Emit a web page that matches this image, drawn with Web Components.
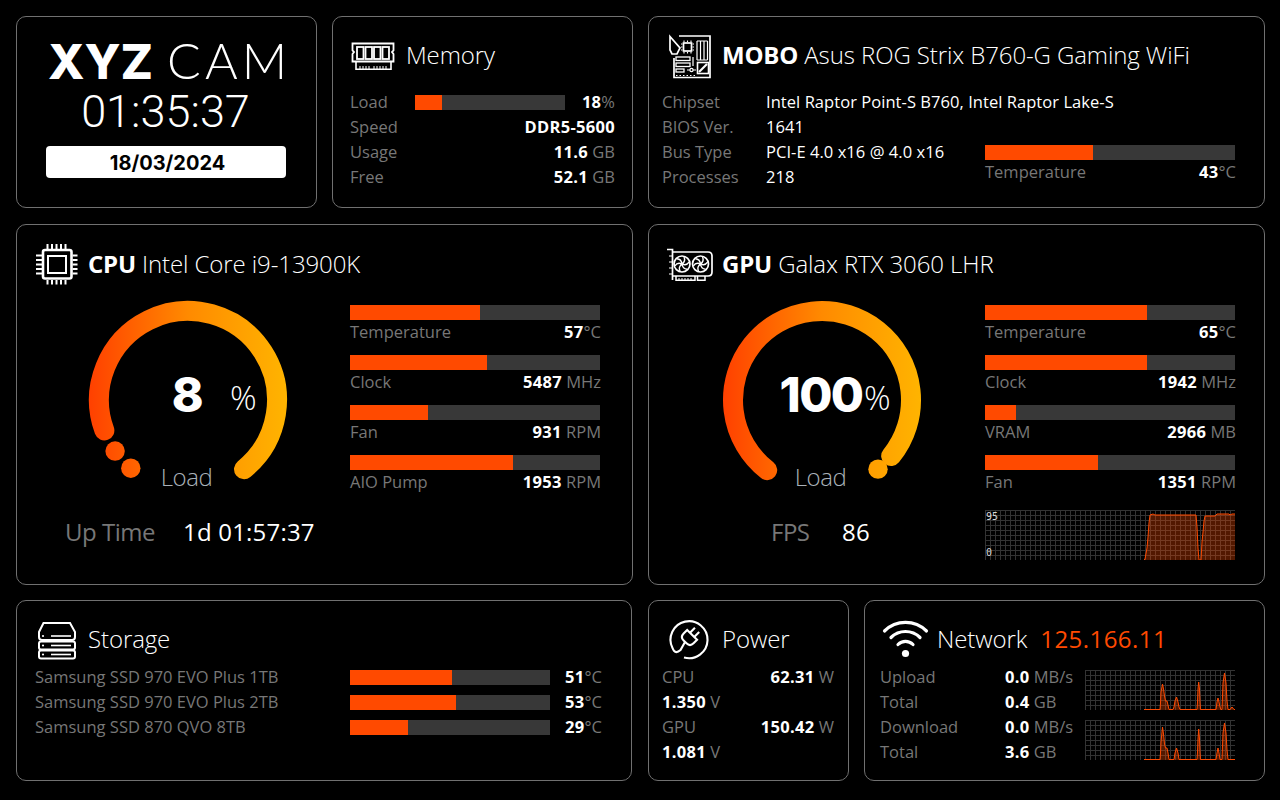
<!DOCTYPE html>
<html>
<head>
<meta charset="utf-8">
<title>XYZ CAM</title>
<style>
  html, body { margin: 0; background: #000; }
  body { width: 1280px; height: 800px; overflow: hidden; font: 16.5px/25px "Open Sans", "Liberation Sans", sans-serif; color: #fff; }
  b { font-weight: 700; color: #fff; letter-spacing: 0.3px; }
  .w { color: #fff; letter-spacing: 0.05px; }
  .ip { color: #ff4a00; margin-left: 13px; font-weight: 400; letter-spacing: 0.45px; }
  span[slot="title"] { letter-spacing: -0.1px; }
  span[slot="title"] b { letter-spacing: -0.2px; }
  dash-meter + dash-meter { margin-top: 10px; }
  dash-meter + dash-graph { margin-top: 15px; }
  dash-graph + dash-graph { margin-top: 10px; }
</style>
</head>
<body>

<dash-page>
  <dash-clock slot="a" style="width:301px"></dash-clock>

  <dash-card slot="a" style="width:301px;--pad:17px;--pad-r:18px;--gap:11px">
    <dash-icon slot="icon" name="ram"></dash-icon>
    <span slot="title">Memory</span>
    <dash-row label="Load" label-w="65">
      <dash-bar slot="mid" value="18" width="150"></dash-bar>
      <span slot="value"><b>18</b>%</span>
    </dash-row>
    <dash-row label="Speed"><b slot="value">DDR5-5600</b></dash-row>
    <dash-row label="Usage"><span slot="value"><b>11.6</b> GB</span></dash-row>
    <dash-row label="Free"><span slot="value"><b>52.1</b> GB</span></dash-row>
  </dash-card>

  <dash-card slot="a" style="width:617px;--pad:13px;--pad-r:30px;--gap:11px">
    <dash-icon slot="icon" name="mobo"></dash-icon>
    <span slot="title"><b>MOBO</b> Asus ROG Strix B760-G Gaming WiFi</span>
    <dash-split left="323">
      <div>
        <dash-row label="Chipset" label-w="104" start><span slot="value" class="w">Intel Raptor Point-S B760, Intel Raptor Lake-S</span></dash-row>
        <dash-row label="BIOS Ver." label-w="104" start><span slot="value" class="w">1641</span></dash-row>
        <dash-row label="Bus Type" label-w="104" start><span slot="value" class="w">PCI-E 4.0 x16 @ 4.0 x16</span></dash-row>
        <dash-row label="Processes" label-w="104" start><span slot="value" class="w">218</span></dash-row>
      </div>
      <dash-meter slot="right" style="margin-top:55px" label="Temperature" value="43" width="250"><span><b>43</b>°C</span></dash-meter>
    </dash-split>
  </dash-card>

  <dash-card slot="b" style="width:617px;--pad:19px;--pad-r:30px;--top:15px">
    <dash-icon slot="icon" name="cpu"></dash-icon>
    <span slot="title"><b>CPU</b> Intel Core i9-13900K</span>
    <dash-split left="314" style="margin-top:17px">
      <div>
        <dash-gauge value="8" label="Load" arc="-110,141" dots="-140,-125" style="margin-left:52px;margin-top:-5px"></dash-gauge>
        <dash-readout label="Up Time" value="1d 01:57:37" left="29" label-w="118"></dash-readout>
      </div>
      <div slot="right">
        <dash-meter label="Temperature" value="52" width="250"><span><b>57</b>°C</span></dash-meter>
        <dash-meter label="Clock" value="54.8" width="250"><span><b>5487</b> MHz</span></dash-meter>
        <dash-meter label="Fan" value="31.2" width="250"><span><b>931</b> RPM</span></dash-meter>
        <dash-meter label="AIO Pump" value="65.2" width="250"><span><b>1953</b> RPM</span></dash-meter>
      </div>
    </dash-split>
  </dash-card>

  <dash-card slot="b" style="width:617px;--pad:18px;--pad-r:30px;--top:15px">
    <dash-icon slot="icon" name="gpu"></dash-icon>
    <span slot="title"><b>GPU</b> Galax RTX 3060 LHR</span>
    <dash-split left="318" style="margin-top:17px">
      <div>
        <dash-gauge value="100" label="Load" arc="-142,129" dots="141" style="margin-left:55px;margin-top:-5px"></dash-gauge>
        <dash-readout label="FPS" value="86" left="104" label-w="71"></dash-readout>
      </div>
      <div slot="right">
        <dash-meter label="Temperature" value="64.8" width="250"><span><b>65</b>°C</span></dash-meter>
        <dash-meter label="Clock" value="64.8" width="250"><span><b>1942</b> MHz</span></dash-meter>
        <dash-meter label="VRAM" value="12.4" width="250"><span><b>2966</b> MB</span></dash-meter>
        <dash-meter label="Fan" value="45.2" width="250"><span><b>1351</b> RPM</span></dash-meter>
        <dash-graph type="fps" width="250" height="50"></dash-graph>
      </div>
    </dash-split>
  </dash-card>

  <dash-card slot="c" style="width:616px;margin-right:1px;--pad:18px;--pad-r:30px">
    <dash-icon slot="icon" name="storage"></dash-icon>
    <span slot="title">Storage</span>
    <dash-row label="Samsung SSD 970 EVO Plus 1TB" label-w="315">
      <dash-bar slot="mid" value="51" width="200"></dash-bar>
      <span slot="value"><b>51</b>°C</span>
    </dash-row>
    <dash-row label="Samsung SSD 970 EVO Plus 2TB" label-w="315">
      <dash-bar slot="mid" value="53" width="200"></dash-bar>
      <span slot="value"><b>53</b>°C</span>
    </dash-row>
    <dash-row label="Samsung SSD 870 QVO 8TB" label-w="315">
      <dash-bar slot="mid" value="29" width="200"></dash-bar>
      <span slot="value"><b>29</b>°C</span>
    </dash-row>
  </dash-card>

  <dash-card slot="c" style="width:201px;--pad:13px;--pad-r:15px">
    <dash-icon slot="icon" name="power"></dash-icon>
    <span slot="title">Power</span>
    <dash-row label="CPU"><span slot="value"><b>62.31</b> W</span></dash-row>
    <dash-row start><span slot="value"><b>1.350</b> V</span></dash-row>
    <dash-row label="GPU"><span slot="value"><b>150.42</b> W</span></dash-row>
    <dash-row start><span slot="value"><b>1.081</b> V</span></dash-row>
  </dash-card>

  <dash-card slot="c" style="width:401px;--pad:15px;--pad-r:29px">
    <dash-icon slot="icon" name="wifi"></dash-icon>
    <span slot="title">Network<span class="ip">125.166.11</span></span>
    <dash-split left="205">
      <div>
        <dash-row label="Upload" label-w="125" start><span slot="value"><b>0.0</b> MB/s</span></dash-row>
        <dash-row label="Total" label-w="125" start><span slot="value"><b>0.4</b> GB</span></dash-row>
        <dash-row label="Download" label-w="125" start><span slot="value"><b>0.0</b> MB/s</span></dash-row>
        <dash-row label="Total" label-w="125" start><span slot="value"><b>3.6</b> GB</span></dash-row>
      </div>
      <div slot="right" style="margin-top:5px">
        <dash-graph type="up" width="150" height="40"></dash-graph>
        <dash-graph type="down" width="150" height="40"></dash-graph>
      </div>
    </dash-split>
  </dash-card>
</dash-page>

<script>
(function() {
  const GREY = '#777';

  function el(html) {
    const t = document.createElement('template');
    t.innerHTML = html;
    return t;
  }

  // page: three rows of cards
  const pageTpl = el(`
    <style>
      :host { display: block; padding: 16px 0 0 16px; }
      .r { display: flex; gap: 15px; }
      .a { height: 192px; margin-bottom: 16px; }
      .b { height: 361px; margin-bottom: 15px; }
      .c { height: 181px; }
    </style>
    <div class="r a"><slot name="a"></slot></div>
    <div class="r b"><slot name="b"></slot></div>
    <div class="r c"><slot name="c"></slot></div>
  `);
  class DashPage extends HTMLElement {
    constructor() {
      super();
      this.attachShadow({ mode: 'open' });
      this.shadowRoot.appendChild(pageTpl.content.cloneNode(true));
    }
  }

  const cardTpl = el(`
    <style>
      :host { display: block; box-sizing: border-box; height: 100%; border: 1px solid #707070; border-radius: 10px; background: #000;
        padding: var(--top, 14px) var(--pad-r, 18px) 0 var(--pad, 18px); flex: none; }
      header { display: flex; align-items: center; height: 48px; font-size: 24px; line-height: 48px; font-weight: 300; color: #fff; white-space: nowrap; margin-bottom: var(--gap, 2px); }
    </style>
    <header><slot name="icon"></slot><slot name="title"></slot></header>
    <slot></slot>
  `);
  class DashCard extends HTMLElement {
    constructor() {
      super();
      this.attachShadow({ mode: 'open' });
      this.shadowRoot.appendChild(cardTpl.content.cloneNode(true));
    }
  }

  const clockTpl = el(`
    <style>
      :host { display: flex; flex-direction: column; align-items: center; box-sizing: border-box; height: 100%; border: 1px solid #707070; border-radius: 10px; padding-top: 16px; flex: none; }
      .logo { height: 54px; line-height: 54px; white-space: nowrap; margin-left: 6px; }
      .logo b { font: 800 48px/54px Inter, sans-serif; }
      .logo span { font: 300 50px/54px Lato, sans-serif; letter-spacing: 4px; margin-left: 14px; }
      .time { height: 50px; font: 300 45px/50px Roboto, sans-serif; margin-left: -2px; }
      .date { width: 240px; height: 32px; margin-top: 9px; margin-left: -2px; background: #fff; border-radius: 4px; color: #000; text-align: center; text-indent: 4px; font: 700 20px/34px Inter, sans-serif; }
    </style>
    <div class="logo"><b>XYZ</b><span>CAM</span></div>
    <div class="time">01:35:37</div>
    <div class="date">18/03/2024</div>
  `);
  class DashClock extends HTMLElement {
    constructor() {
      super();
      this.attachShadow({ mode: 'open' });
      this.shadowRoot.appendChild(clockTpl.content.cloneNode(true));
    }
  }

  const barTpl = el(`
    <style>
      :host { display: block; height: 15px; background: #383838; flex: none; }
      div { height: 100%; background: #ff4a00; }
    </style>
    <div></div>
  `);
  class DashBar extends HTMLElement {
    static get observedAttributes() {
      return ['value', 'width'];
    }
    constructor() {
      super();
      this.attachShadow({ mode: 'open' });
      this.shadowRoot.appendChild(barTpl.content.cloneNode(true));
    }
    attributeChangedCallback(name, oldValue, newValue) {
      if (name === 'width') this.style.width = newValue + 'px';
      if (name === 'value') this.shadowRoot.querySelector('div').style.width = newValue + '%';
    }
  }

  const rowTpl = el(`
    <style>
      :host { display: flex; align-items: center; height: 25px; line-height: 25px; color: ${GREY}; white-space: nowrap; }
      .l, .v { margin-bottom: 2px; }
      .l { flex: none; }
      .v { flex: 1; text-align: right; margin-right: -1px; }
      :host([start]) .v { text-align: left; }
    </style>
    <span class="l"></span><slot name="mid"></slot><span class="v"><slot name="value"></slot></span>
  `);
  class DashRow extends HTMLElement {
    constructor() {
      super();
      this.attachShadow({ mode: 'open' });
      this.shadowRoot.appendChild(rowTpl.content.cloneNode(true));
    }
    connectedCallback() {
      const l = this.shadowRoot.querySelector('.l');
      l.textContent = this.getAttribute('label') || '';
      if (this.hasAttribute('label-w')) l.style.width = this.getAttribute('label-w') + 'px';
    }
  }

  const meterTpl = el(`
    <style>
      :host { display: block; color: ${GREY}; }
      .t { display: flex; justify-content: space-between; height: 25px; line-height: 23px; margin-right: -1px; white-space: nowrap; }
    </style>
    <dash-bar></dash-bar>
    <div class="t"><span class="l"></span><slot></slot></div>
  `);
  class DashMeter extends HTMLElement {
    constructor() {
      super();
      this.attachShadow({ mode: 'open' });
      this.shadowRoot.appendChild(meterTpl.content.cloneNode(true));
    }
    connectedCallback() {
      const bar = this.shadowRoot.querySelector('dash-bar');
      bar.setAttribute('width', this.getAttribute('width'));
      bar.setAttribute('value', this.getAttribute('value'));
      this.shadowRoot.querySelector('.l').textContent = this.getAttribute('label');
      this.style.width = this.getAttribute('width') + 'px';
    }
  }

  const splitTpl = el(`
    <style>
      :host { display: flex; }
      .l { flex: none; }
    </style>
    <div class="l"><slot></slot></div><slot name="right"></slot>
  `);
  class DashSplit extends HTMLElement {
    constructor() {
      super();
      this.attachShadow({ mode: 'open' });
      this.shadowRoot.appendChild(splitTpl.content.cloneNode(true));
    }
    connectedCallback() {
      this.shadowRoot.querySelector('.l').style.width = this.getAttribute('left') + 'px';
    }
  }

  const readoutTpl = el(`
    <style>
      :host { display: flex; height: 32px; margin-top: 16px; font-size: 24px; line-height: 32px; white-space: nowrap; }
      .l { color: ${GREY}; flex: none; letter-spacing: -0.5px; }
      .v { letter-spacing: 0.2px; }
    </style>
    <span class="l"></span><span class="v"></span>
  `);
  class DashReadout extends HTMLElement {
    constructor() {
      super();
      this.attachShadow({ mode: 'open' });
      this.shadowRoot.appendChild(readoutTpl.content.cloneNode(true));
    }
    connectedCallback() {
      const l = this.shadowRoot.querySelector('.l');
      l.textContent = this.getAttribute('label');
      l.style.width = this.getAttribute('label-w') + 'px';
      this.style.paddingLeft = this.getAttribute('left') + 'px';
      this.shadowRoot.querySelector('.v').textContent = this.getAttribute('value');
    }
  }

  // gauge, angles are clockwise from the top
  const gaugeTpl = el(`
    <style>
      :host { display: block; position: relative; width: 200px; height: 200px; }
      svg { display: block; }
      .val { position: absolute; left: -2px; right: 0; top: 63px; text-align: center; font: 800 48px/64px Inter, sans-serif; letter-spacing: -1.5px; }
      .pct { position: absolute; left: 142px; top: 76px; font-size: 33px; line-height: 44px; font-weight: 300; }
      .lab { position: absolute; left: -3px; right: 0; top: 161px; text-align: center; font-size: 24px; line-height: 32px; font-weight: 300; color: #a9b1b8; letter-spacing: -0.5px; }
    </style>
    <svg width="200" height="200" viewBox="0 0 200 200"></svg>
    <span class="val"></span><span class="pct">%</span><span class="lab"></span>
  `);
  let gaugeId = 0;
  function pt(a) {
    const r = a * Math.PI / 180;
    return [100 + 89 * Math.sin(r), 100 - 89 * Math.cos(r)];
  }
  class DashGauge extends HTMLElement {
    constructor() {
      super();
      this.attachShadow({ mode: 'open' });
      this.shadowRoot.appendChild(gaugeTpl.content.cloneNode(true));
    }
    connectedCallback() {
      const [a0, a1] = this.getAttribute('arc').split(',').map(Number);
      const p0 = pt(a0), p1 = pt(a1);
      const id = 'g' + (gaugeId++);
      const large = (a1 - a0) > 180 ? 1 : 0;
      const dots = this.getAttribute('dots').split(',').map(Number).map(a => {
        const p = pt(a);
        return `<circle cx="${p[0]}" cy="${p[1]}" r="9.7" fill="url(#${id})"/>`;
      }).join('');
      this.shadowRoot.querySelector('svg').innerHTML = `
        <defs><linearGradient id="${id}" gradientUnits="userSpaceOnUse" x1="1" y1="0" x2="199" y2="0">
          <stop offset="0" stop-color="#ff4000"/><stop offset=".5" stop-color="#ff8a00"/><stop offset="1" stop-color="#ffb400"/>
        </linearGradient></defs>
        <path d="M${p0[0]} ${p0[1]}A89 89 0 ${large} 1 ${p1[0]} ${p1[1]}" fill="none" stroke="url(#${id})" stroke-width="20" stroke-linecap="round"/>
        ${dots}`;
      this.shadowRoot.querySelector('.val').textContent = this.getAttribute('value');
      this.shadowRoot.querySelector('.lab').textContent = this.getAttribute('label');
    }
  }

  // trace points read off the reference: x, y in graph pixels
  const TRACES = {
    fps: [[159,50],[160,49],[162,38],[163,27],[164,13],[165,5],[168,4],[170,5],[211,5],[212,17],[213,38],[214,50],[216,50],[217,32],[218,22],[219,11],[220,6],[230,6],[232,4],[244,4],[245,5],[247,4],[250,4]],
    up: [[59,39.5],[75,39.5],[75.5,33],[76,22],[77.5,14],[78.5,19],[79.5,26],[80.5,31],[82,31],[83,35],[84,39.5],[88,39.5],[89,37],[90,31],[91.5,27],[93,32],[94,37],[95,39.5],[112,39.5],[112.5,32],[113,19],[113.7,12],[114.5,19],[115,32],[115.5,39.5],[131,39.5],[132,32],[133,28],[134,32],[135,37],[136,39.5],[137,39.5],[138,13],[139.5,3],[141,13],[142,31],[143,39.5],[145,39.5],[147,37],[149,39.5],[150,39.5]],
    down: [[59,39.5],[75,39.5],[75.5,33],[76,22],[77.5,7],[78.5,14],[79.5,24],[80.5,28],[82,28],[83,33],[84,39.5],[89,39.5],[90,33],[91.5,28],[93,33],[94,39.5],[112,39.5],[112.5,32],[113,19],[113.7,9],[114.5,19],[115,32],[115.5,39.5],[131,39.5],[132,33],[133,28],[134,33],[135,39.5],[137,39.5],[138,13],[139.5,3],[141,13],[142,30],[143,39.5],[150,39.5]]
  };

  const graphTpl = el(`
    <style>
      :host { display: block; position: relative; }
      svg { display: block; }
      span { position: absolute; left: 1px; font: 10px/10px "DejaVu Sans Mono", monospace; color: #d8d8d8; }
    </style>
    <svg></svg>
  `);
  class DashGraph extends HTMLElement {
    constructor() {
      super();
      this.attachShadow({ mode: 'open' });
      this.shadowRoot.appendChild(graphTpl.content.cloneNode(true));
    }
    connectedCallback() {
      const w = +this.getAttribute('width'), h = +this.getAttribute('height');
      const type = this.getAttribute('type');
      const svg = this.shadowRoot.querySelector('svg');
      svg.setAttribute('width', w);
      svg.setAttribute('height', h);
      svg.setAttribute('viewBox', `0 0 ${w} ${h}`);
      let grid = '';
      for (let x = 0.5; x <= w; x += 5) grid += `M${x} 0V${h}`;
      for (let y = 0.5; y <= h; y += 5) grid += `M0 ${y}H${w}`;
      const pts = TRACES[type];
      const line = pts.map(p => p.join(' ')).join('L');
      svg.innerHTML = `<path d="${grid}" stroke="#333" stroke-width="1" fill="none"/>
        <path d="M${pts[0][0]} ${h}L${line}L${pts[pts.length-1][0]} ${h}Z" fill="#ff4a00" fill-opacity=".32"/>
        <path d="M${line}" stroke="#ff4a00" stroke-width="1" fill="none"/>`;
      if (type === 'fps') {
        const hi = document.createElement('span');
        hi.textContent = '95'; hi.style.top = '2px';
        const lo = document.createElement('span');
        lo.textContent = '0'; lo.style.top = '38px';
        this.shadowRoot.append(hi, lo);
      }
    }
  }

  // icon boxes use page coordinates as their viewBox, so the strokes read straight off the screenshot
  function ticks(list, fn) { return list.map(fn).join(''); }
  const ICONS = {
    ram: { box: '350 31 56 48', svg: `
      <path d="M352.5 43.5H393.5V50.5L392 52L393.5 54V61.5H352.5V54L354 52L352.5 50.5Z" fill="none" stroke="#fff" stroke-width="1.8"/>
      ${ticks([357, 365.5, 374, 382.5], x => `<rect x="${x}" y="47" width="6.5" height="12" fill="none" stroke="#fff" stroke-width="1.8"/>`)}
      <path d="M356 62V69.2H391V62" fill="none" stroke="#fff" stroke-width="1.6"/>
      <path d="M360 69V66M363 69V66M366 69V66M369 69V66M374 69V66M377 69V66M380 69V66M383 69V66M386 69V66" stroke="#fff" stroke-width="1"/>` },
    mobo: { box: '662 31 60 48', svg: `
      <path d="M679 36H710V77.5H674V58" fill="none" stroke="#fff" stroke-width="1.7"/>
      <path d="M670 36.5L680 48L677 54L672 54L670 50Z" fill="none" stroke="#fff" stroke-width="1.7"/>
      <rect x="683.5" y="43" width="8" height="8" fill="none" stroke="#fff" stroke-width="1.7"/>
      <path d="M684 40.5V42M687.5 40.5V42M691 40.5V42M684 52V53.5M687.5 52V53.5M691 52V53.5M681 44H682.5M681 47H682.5M681 50H682.5M692.5 44H694M692.5 47H694M692.5 50H694" stroke="#fff" stroke-width="1.1"/>
      <path d="M697 41V60M700.5 41V60M704 41V60M707.5 41V60M697 41H707.5M697 60H707.5" stroke="#fff" stroke-width="1.2" fill="none"/>
      <rect x="676" y="57" width="14" height="3.5" fill="none" stroke="#fff" stroke-width="1.3"/>
      <rect x="676" y="63" width="14" height="3.5" fill="none" stroke="#fff" stroke-width="1.3"/>
      <rect x="676" y="69" width="8" height="3" fill="none" stroke="#fff" stroke-width="1.3"/>
      <path d="M693 57V66M687 70H696" stroke="#fff" stroke-width="1.2"/>
      <circle cx="691.5" cy="70" r="1.6" fill="#000" stroke="#fff" stroke-width="1.2"/>
      <rect x="697.5" y="62.5" width="11" height="11" fill="none" stroke="#fff" stroke-width="1.6"/>
      <path d="M699 72L707 64" stroke="#fff" stroke-width="2.2"/>
      <path d="M676 75.5H696" stroke="#fff" stroke-width="1.2" stroke-dasharray="1.5 2"/>` },
    cpu: { box: '36 240 52 48', svg: `
      <rect x="43" y="250" width="28.5" height="28.5" rx="2" fill="none" stroke="#fff" stroke-width="2.6"/>
      <rect x="48" y="256" width="18" height="17" fill="none" stroke="#fff" stroke-width="2"/>
      ${ticks([47.5, 52, 56.5, 61, 65.5], x => `<path d="M${x} 244V249M${x} 280V284.5" stroke="#fff" stroke-width="2"/>`)}
      ${ticks([255.5, 260, 264.5, 269, 273.5], y => `<path d="M36 ${y}H42M72.5 ${y}H77.5" stroke="#fff" stroke-width="2"/>`)}` },
    gpu: { box: '667 240 55 48', svg: `
      <path d="M667 249.5H672.5V280M672.5 252H708Q712 252 712 256V272Q712 276 708 276H672.5" fill="none" stroke="#fff" stroke-width="1.7"/>
      <path d="M669 256H672M669 262H672M669 268H672M669 274H672" stroke="#fff" stroke-width="1.2"/>
      <path d="M676 276V280.2H695V276M697.5 276V280.2H705V276" fill="none" stroke="#fff" stroke-width="1.5"/>
      <path d="M679 280V278M682 280V278M685 280V278M688 280V278M691 280V278" stroke="#fff" stroke-width="1"/>
      ${ticks([682, 700.5], cx => `<circle cx="${cx}" cy="264" r="8" fill="none" stroke="#fff" stroke-width="1.7"/><circle cx="${cx}" cy="264" r="1.6" fill="#fff"/>` +
        ticks([0, 60, 120, 180, 240, 300], a => `<path d="M${cx} 264Q${cx + 4} 261 ${cx + 2} 257" fill="none" stroke="#fff" stroke-width="1.4" transform="rotate(${a} ${cx} 264)"/>`))}` },
    storage: { box: '35 615 53 48', svg: `
      <path d="M39 632L43.5 623H70L75 632V637Q75 640 72 640H42Q39 640 39 637Z" fill="none" stroke="#fff" stroke-width="2"/>
      <rect x="39" y="641.5" width="36" height="8" rx="2" fill="none" stroke="#fff" stroke-width="2"/>
      <rect x="39" y="650.5" width="36" height="8" rx="2" fill="none" stroke="#fff" stroke-width="2"/>
      ${ticks([636, 645.5, 654.5], y => `<circle cx="43" cy="${y}" r="1.1" fill="#fff"/><path d="M51 ${y}H71" stroke="#fff" stroke-width="1.6"/>`)}` },
    power: { box: '662 615 60 48', svg: `
      <path d="M684 657.5A18.5 18.5 0 1 0 672.5 648Q675 655 680.5 650L685 642" fill="none" stroke="#fff" stroke-width="2.1"/>
      <g transform="rotate(45 690 637)" fill="none" stroke="#fff" stroke-width="2.1">
        <path d="M683 634H697V639Q697 644 692 644H688Q683 644 683 639Z"/>
        <path d="M687 634V627M693 634V627"/>
      </g>` },
    wifi: { box: '880 615 57 48', svg: `
      <circle cx="905.5" cy="653.5" r="3.6" fill="#fff"/>
      <path d="M898 644.5A10.5 10.5 0 0 1 913 644.5M891 637.5A20.5 20.5 0 0 1 920 637.5M884.5 631A30 30 0 0 1 926.5 631" fill="none" stroke="#fff" stroke-width="3.2" stroke-linecap="round"/>` }
  };
  class DashIcon extends HTMLElement {
    constructor() {
      super();
      this.attachShadow({ mode: 'open' });
    }
    connectedCallback() {
      const icon = ICONS[this.getAttribute('name')];
      const [, , w, h] = icon.box.split(' ');
      this.shadowRoot.innerHTML = `<style>:host { display: block; flex: none; width: ${w}px; height: ${h}px; } svg { display: block; }</style>
        <svg width="${w}" height="${h}" viewBox="${icon.box}">${icon.svg}</svg>`;
    }
  }

  window.customElements.define('dash-page', DashPage);
  window.customElements.define('dash-card', DashCard);
  window.customElements.define('dash-clock', DashClock);
  window.customElements.define('dash-bar', DashBar);
  window.customElements.define('dash-row', DashRow);
  window.customElements.define('dash-meter', DashMeter);
  window.customElements.define('dash-split', DashSplit);
  window.customElements.define('dash-readout', DashReadout);
  window.customElements.define('dash-gauge', DashGauge);
  window.customElements.define('dash-graph', DashGraph);
  window.customElements.define('dash-icon', DashIcon);
})();
</script>
</body>
</html>
